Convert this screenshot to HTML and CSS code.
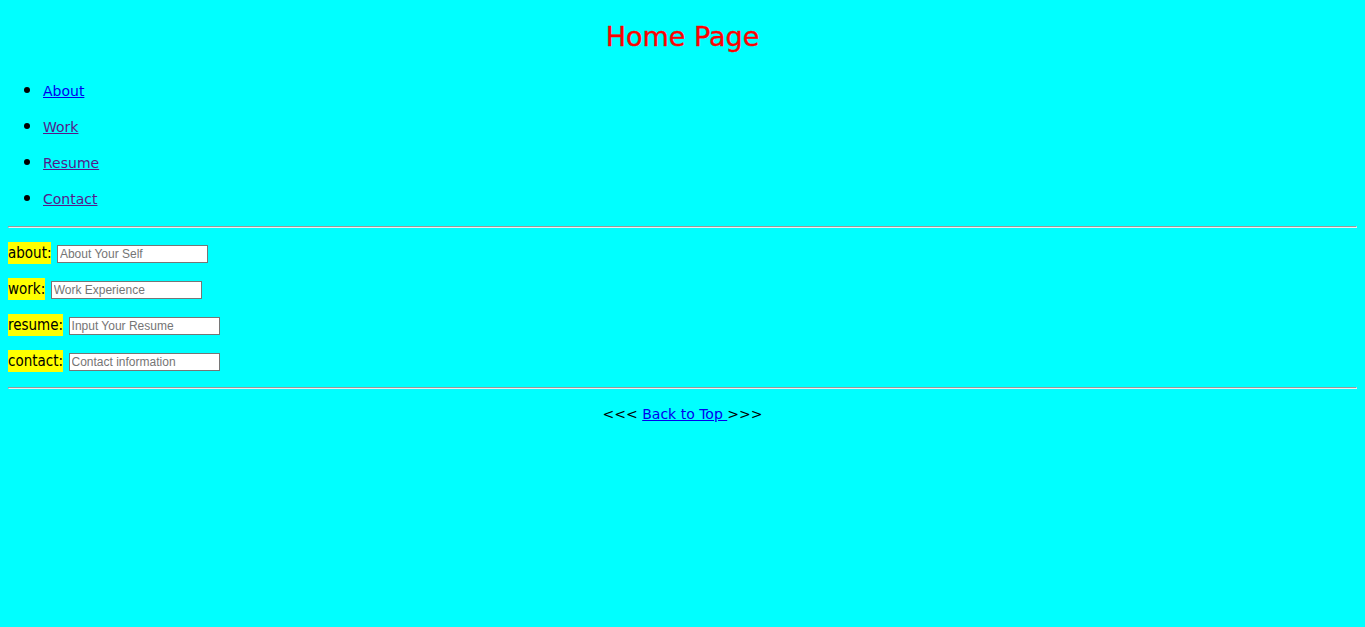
FILE: index.html
```html
<!DOCTYPE html>
<html lang="en">
<head>
<meta charset="utf-8">
<title>Home Page</title>
<link rel="stylesheet" href="styles.css">
</head>
<body>
<h1 class="title" id="top">Home Page</h1>
<ul class="nav">
  <li><a href="#about">About</a></li>
  <li><a class="visited" href="#work">Work</a></li>
  <li><a class="visited" href="#resume">Resume</a></li>
  <li><a class="visited" href="#contact">Contact</a></li>
</ul>
<hr class="rule">
<form class="fields">
  <div class="row"><label class="tag" for="about">about:</label> <input class="box" id="about" type="text" placeholder="About Your Self"></div>
  <div class="row"><label class="tag" for="work">work:</label> <input class="box" id="work" type="text" placeholder="Work Experience"></div>
  <div class="row"><label class="tag" for="resume">resume:</label> <input class="box" id="resume" type="text" placeholder="Input Your Resume"></div>
  <div class="row"><label class="tag" for="contact">contact:</label> <input class="box" id="contact" type="text" placeholder="Contact information"></div>
</form>
<hr class="rule">
<p class="back">&lt;&lt;&lt; <a href="#top">Back to Top </a>&gt;&gt;&gt;</p>
</body>
</html>
```

FILE: styles.css
```css
html, body {
  background: #00ffff;
}
body {
  margin: 8px;
  font-family: "DejaVu Sans", Verdana, sans-serif;
  font-size: 14px;
  color: #000;
}
a {
  color: #0000ee;
}
a.visited {
  color: #551a8b;
}
.title {
  margin: 9px 0 0;
  height: 40px;
  text-align: center;
  color: #ff0000;
  font-size: 27px;
  font-weight: normal;
  line-height: 40px;
  -webkit-text-stroke: 0.4px #ff0000;
}
.nav {
  margin: 23px 0 2px;
  padding-left: 35px;
}
.nav li {
  height: 36px;
  line-height: 18px;
}
.nav li::marker {
  font-size: 19px;
}
.rule {
  margin: 0;
  border-style: inset;
  border-width: 1px;
  color: gray;
}
.fields {
  margin: 14px 0 1px;
}
.row {
  height: 36px;
  line-height: 22px;
}
.tag {
  background: #ffff00;
  font-family: "DejaVu Sans Condensed", "DejaVu Sans", sans-serif;
  font-stretch: condensed;
  font-size: 15px;
  padding: 2px 0 2px;
}
.box {
  box-sizing: border-box;
  width: 151px;
  height: 18px;
  margin-left: 1px;
  padding: 0 2px;
  border: 1px solid #767676;
  background: #fff;
  font-family: "Liberation Sans", Arial, sans-serif;
  font-size: 12px;
  vertical-align: baseline;
}
.box::placeholder {
  color: #757575;
}
.back {
  margin: 17px 0 0;
  text-align: center;
}
```
